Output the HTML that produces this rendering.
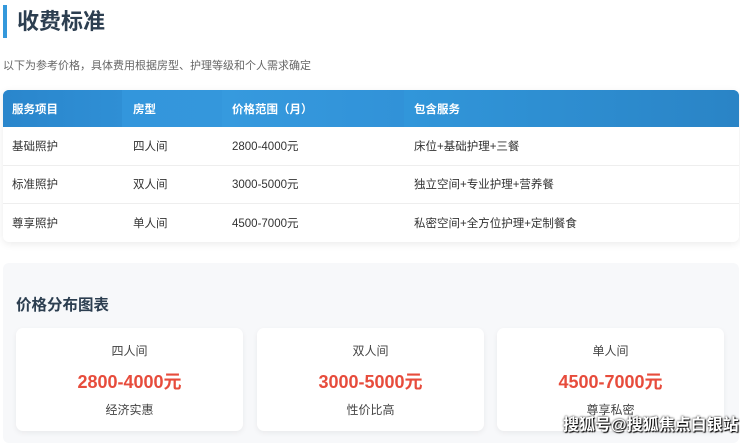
<!DOCTYPE html>
<html><head><meta charset="utf-8"><style>
*{margin:0;padding:0;box-sizing:border-box}
body{width:740px;height:438px;overflow:hidden;background:#fff;font-family:"Liberation Sans","Noto Sans CJK SC",sans-serif;position:relative}
.t{position:absolute;left:3px;top:5px;height:33px;border-left:4px solid #3498db;padding-left:10px;font-size:22px;font-weight:bold;color:#2c3e50;line-height:33px}
.sub{position:absolute;left:3px;top:57px;font-size:11px;color:#666}
.tbl{position:absolute;left:3px;top:90px;width:736px;height:152px;border-radius:6px;overflow:hidden;box-shadow:0 2px 8px rgba(0,0,0,.08)}
.row{display:flex;height:38.5px;align-items:center;border-bottom:1px solid #eee;font-size:11.5px;color:#333}
.hd{height:37px;background:#3092d8;color:#fff;font-weight:bold;border:0}
.hd div{height:100%;display:flex;align-items:center}
.hd div:nth-child(1){background:linear-gradient(90deg,#2a86cc,#2f8fd5)}
.hd div:nth-child(2){background:linear-gradient(90deg,#3396dc,#3497dc)}
.hd div:nth-child(3){background:linear-gradient(90deg,#369ade,#3192d8)}
.hd div:nth-child(4){background:linear-gradient(90deg,#3196da,#2a84c6)}
.c1{width:119px;padding-left:9px}.c2{width:100px;padding-left:11px}.c3{width:182px;padding-left:10px}.c4{flex:1;padding-left:10px}
.sec{position:absolute;left:3px;top:263px;width:736px;height:180px;background:#f7f8fa;border-radius:6px}
.h2{position:absolute;left:16px;top:293px;font-size:15.5px;font-weight:bold;color:#2c3e50}
.card{position:absolute;top:328px;width:227px;height:103px;background:#fff;border-radius:7px;box-shadow:0 2px 6px rgba(0,0,0,.06);text-align:center}
.card .a{margin-top:16px;font-size:12px;color:#444;line-height:14px}
.card .p{margin-top:14px;font-size:18px;font-weight:bold;color:#e74c3c;line-height:20px}
.card .d{margin-top:11px;font-size:12px;color:#444;line-height:14px}
.wm{position:absolute;left:563px;top:411px;font-size:16px;color:#fff;font-weight:bold;text-shadow:0 0 2px #000,1px 1px 1px #000}
</style></head><body>
<div class="t">收费标准</div>
<div class="sub">以下为参考价格，具体费用根据房型、护理等级和个人需求确定</div>
<div class="tbl">
<div class="row hd"><div class="c1">服务项目</div><div class="c2">房型</div><div class="c3">价格范围（月）</div><div class="c4">包含服务</div></div>
<div class="row"><div class="c1">基础照护</div><div class="c2">四人间</div><div class="c3">2800-4000元</div><div class="c4">床位+基础护理+三餐</div></div>
<div class="row"><div class="c1">标准照护</div><div class="c2">双人间</div><div class="c3">3000-5000元</div><div class="c4">独立空间+专业护理+营养餐</div></div>
<div class="row" style="border:0"><div class="c1">尊享照护</div><div class="c2">单人间</div><div class="c3">4500-7000元</div><div class="c4">私密空间+全方位护理+定制餐食</div></div>
</div>
<div class="sec"></div>
<div class="h2">价格分布图表</div>
<div class="card" style="left:16px"><div class="a">四人间</div><div class="p">2800-4000元</div><div class="d">经济实惠</div></div>
<div class="card" style="left:257px"><div class="a">双人间</div><div class="p">3000-5000元</div><div class="d">性价比高</div></div>
<div class="card" style="left:497px"><div class="a">单人间</div><div class="p">4500-7000元</div><div class="d">尊享私密</div></div>
<div class="wm">搜狐号@搜狐焦点白银站</div>
</body></html>
